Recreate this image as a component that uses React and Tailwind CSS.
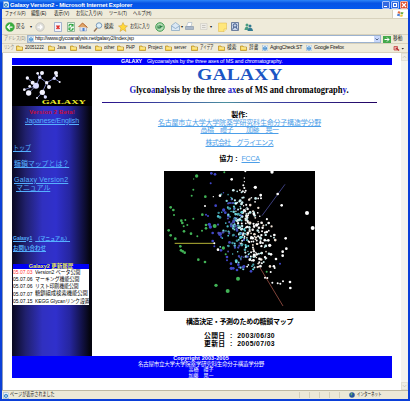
import React from "react";

const JP = "font-['Liberation_Sans','Noto_Sans_CJK_JP',sans-serif]";

/* One line of text, with an exact line height and an optional fixed width. */
function Line({ className = "", children }) {
  return <div className={"whitespace-pre flex items-center shrink-0 " + className}>{children}</div>;
}

/* Condensed text: half-width kana look, inside a slot of fixed width. */
function Narrow({ className = "", scale = "scale-x-[0.78]", children }) {
  return (
    <span className={"block shrink-0 whitespace-nowrap " + className}>
      <span className={"inline-block origin-left " + scale}>{children}</span>
    </span>
  );
}

function Folder({ label, className, scale = "" }) {
  return (
    <div className={"flex items-center gap-[2px] whitespace-nowrap shrink-0 " + className}>
      <svg className="w-[7px] h-[6px] shrink-0" viewBox="0 0 14 12">
        <path d="M1 2h5l1 2h6v7H1z" fill="#f7d65a" stroke="#b58a1c" strokeWidth="1.4" />
        <path d="M3 6h9" stroke="#fff3b0" strokeWidth="2" />
      </svg>
      <span className={"inline-block origin-left " + scale}>{label}</span>
    </div>
  );
}

function IEIcon({ className = "" }) {
  return (
    <svg className={"shrink-0 w-[7px] h-[7px] " + className} viewBox="0 0 14 14">
      <path d="M1 0h10l3 3v11H1z" fill="#e8f3fc" stroke="#7597ba" />
      <circle cx="7" cy="8" r="3.8" fill="none" stroke="#287bc5" strokeWidth="2" />
      <path d="M4 8h7" stroke="#287bc5" strokeWidth="1.8" />
    </svg>
  );
}

function Toolbar() {
  return (
    <div className="flex h-[16px] items-center pl-[3px] text-[6px] border-t border-[#d8d2bd]">
      <svg className="w-[10px] h-[10px]" viewBox="0 0 20 20">
        <circle cx="10" cy="10" r="9" fill="#36ad3c" stroke="#69ad64" />
        <path d="M15 10H6m4-5-5 5 5 5" fill="none" stroke="#fff" strokeWidth="2.5" />
      </svg>
      <Narrow className="w-[14px] ml-[1px] text-[5.3px]" scale="scale-x-[0.85]">戻る</Narrow>
      <span className="w-[7px] text-[4px]">▾</span>
      <svg className="w-[10px] h-[10px] ml-[-2px]" viewBox="0 0 20 20">
        <circle cx="10" cy="10" r="8.5" fill="#deded9" stroke="#b0b1ab" />
        <path d="M5 10h9m-4-4 4 4-4 4" fill="none" stroke="#fff" strokeWidth="2.5" />
      </svg>
      <svg className="w-[8px] h-[10px] ml-[9px]" viewBox="0 0 16 20">
        <path d="M1 1h14v18H1z" fill="#f2f5fc" stroke="#8a9dc4" strokeWidth="1.5" />
        <path d="m5 7 6 7m0-7-6 7" stroke="#e0332f" strokeWidth="3" />
      </svg>
      <svg className="w-[8px] h-[10px] ml-[5px]" viewBox="0 0 16 20">
        <path d="M1 1h14v18H1z" fill="#eaf6ea" stroke="#7ea58a" strokeWidth="1.5" />
        <path d="M12 8a4 4 0 0 0-8 1m0 4a4 4 0 0 0 8-1M12 4v4H8M4 16v-4h4" fill="none" stroke="#28a13a" strokeWidth="2.2" />
      </svg>
      <svg className="w-[10px] h-[10px] ml-[3px]" viewBox="0 0 20 20">
        <path d="M4 9v9h13V9" fill="#dfe5f5" stroke="#7c8eb4" />
        <path d="M1 10 9 2l10 9" fill="#e0a76a" stroke="#b6622c" strokeWidth="2" />
        <path d="M9 12h4v6H9z" fill="#4c81ce" />
      </svg>
      <svg className="w-[10px] h-[10px] ml-[5px]" viewBox="0 0 20 20">
        <circle cx="12" cy="7" r="5.5" fill="#dff0fa" stroke="#7898b9" strokeWidth="2" />
        <path d="m8 12-6 7" stroke="#987557" strokeWidth="3" />
      </svg>
      <Narrow className="ml-[1px] w-[14px] text-[5.3px]" scale="scale-x-[0.92]">検索</Narrow>
      <svg className="w-[10px] h-[10px]" viewBox="0 0 20 20">
        <path d="m10 1 3 6 6 1-5 4 2 7-6-4-6 4 2-7-5-4 6-1z" fill="#ffd839" stroke="#cf9a2c" />
      </svg>
      <Narrow className="ml-[2px] w-[25px] text-[5.3px]" scale="scale-x-[0.76]">お気に入り</Narrow>
      <svg className="w-[10px] h-[10px]" viewBox="0 0 20 20">
        <circle cx="10" cy="10" r="8.5" fill="#b5dcb6" stroke="#3e9b50" strokeWidth="2" />
        <path d="M6 7v5h5m-1-6v5l5-3" fill="none" stroke="#287e41" strokeWidth="2.2" />
      </svg>
      <svg className="w-[9px] h-[9px] ml-[6px]" viewBox="0 0 18 18">
        <path d="M1 7 9 1l8 6v10H1z" fill="#dbe8f4" stroke="#86a6c1" strokeWidth="1.5" />
        <path d="m1 8 8 5 8-5" fill="none" stroke="#7fa1c1" strokeWidth="1.5" />
      </svg>
      <span className="ml-[1px] w-[4px] text-[4px]">▾</span>
      <svg className="w-[9px] h-[9px]" viewBox="0 0 18 18">
        <path d="M6 1h8l-2 8H3z" fill="#fff" stroke="#92a7bd" />
        <path d="M1 9h16v6H1z" fill="#aab7c7" stroke="#7287a1" />
      </svg>
      <svg className="w-[8px] h-[9px] ml-[6px] opacity-60" viewBox="0 0 16 18">
        <path d="M1 3h13v12H1z" fill="#eee" stroke="#aaa" />
        <path d="M4 7h7m-7 4h7" stroke="#999" strokeWidth="1.5" />
      </svg>
      <span className="ml-[2px] w-[8px] text-[4px]">▾</span>
      <svg className="w-[9px] h-[10px]" viewBox="0 0 18 20">
        <path d="M1 2h16v12l-5 5H1z" fill="#ffe77b" stroke="#dfb547" />
        <path d="M17 14h-5v5" fill="#fff4b8" stroke="#dfb547" />
      </svg>
      <svg className="w-[8px] h-[9px] ml-[4px]" viewBox="0 0 16 18">
        <path d="M1 1h14v16H1z" fill="#c7d4e9" stroke="#6f809e" strokeWidth="2" />
        <circle cx="8" cy="7" r="3.5" fill="none" stroke="#405a8a" strokeWidth="2" />
        <path d="m6 10-3 5m7-5 3 5" stroke="#405a8a" strokeWidth="2" />
      </svg>
      <svg className="w-[9px] h-[10px] ml-[5px]" viewBox="0 0 18 20">
        <circle cx="6" cy="6" r="3" fill="#4a9c82" />
        <path d="M1 16c0-9 9-9 9 0z" fill="#4a9c82" />
        <circle cx="12" cy="8" r="3" fill="#347b91" />
        <path d="M7 18c0-9 11-9 11 0z" fill="#347b91" />
      </svg>
    </div>
  );
}

const atoms = [
  [82, 84, 5], [98, 98, 6], [108, 107, 9], [89, 109, 4], [73, 119, 4], [86, 129, 8],
  [127, 127, 8], [119, 82, 5], [113, 70, 4], [126, 69, 6], [140, 98, 5], [147, 111, 6],
  [163, 85, 5], [168, 69, 6], [170, 77, 4], [179, 96, 3], [111, 144, 3], [136, 141, 5],
];

function Molecule() {
  return (
    <svg className="w-[76px] h-[40px]" viewBox="48 48 228 120">
      <path
        d="m82 84 26 23-35 12m35-12-22 22m22-22 11-25-6-12m6 12 7-13m-7 13 21 16 23-13 5-16m-5 16 16 11m-39 2 7 13m-7-13-13 29-16 17m16-17 9 14"
        fill="none" stroke="#8c93d8" strokeWidth="2.5"
      />
      {atoms.map(([x, y, r], i) => (
        <circle key={i} cx={x} cy={y} r={r} fill={i % 5 === 2 ? "#d9dcff" : "#f3f3ff"} />
      ))}
      <text x="125" y="161" textLength="133" lengthAdjust="spacingAndGlyphs" fontSize="21" fontWeight="700" fill="#f2ee2c" fontFamily="Liberation Serif, serif">GALAXY</text>
    </svg>
  );
}

/* Isolated points of the sugar-chain map, grouped by colour. */
const green = [
  [110, 33, 5], [101, 42, 2], [100, 74, 3], [95, 92, 3], [136, 95, 4], [32, 127, 4], [40, 135, 4],
  [42, 150, 3], [127, 149, 4], [100, 161, 3], [64, 167, 4], [76, 165, 3], [67, 174, 4], [82, 180, 3],
  [71, 184, 3], [26, 196, 4], [32, 211, 4], [46, 221, 4], [72, 199, 4], [93, 206, 4], [112, 214, 3],
  [126, 197, 3], [138, 180, 4], [138, 190, 4], [164, 183, 6], [61, 244, 4], [63, 256, 4], [68, 259, 4],
  [74, 263, 4], [115, 284, 4], [135, 291, 4], [190, 249, 5], [234, 341, 6], [168, 361, 5], [203, 378, 6],
  [193, 22, 3], [197, 268, 3], [320, 320, 3],
];
const blue = [
  [154, 25, 4], [165, 28, 4], [152, 55, 3], [138, 149, 3], [144, 153, 3], [148, 178, 5], [151, 186, 5],
  [167, 122, 4], [158, 204, 4], [180, 207, 6], [183, 216, 3], [158, 228, 4], [163, 244, 3], [183, 256, 4],
  [191, 135, 5], [196, 143, 4], [201, 276, 4], [201, 286, 3], [213, 296, 4], [214, 310, 5], [220, 310, 4],
  [231, 315, 4], [235, 299, 4], [237, 307, 3], [252, 304, 4], [273, 319, 4], [360, 296, 3], [205, 153, 4],
];
const white = [
  [336, 21, 5], [256, 19, 3], [215, 43, 4], [253, 39, 2], [253, 50, 2], [250, 61, 3], [253, 69, 3],
  [257, 77, 3], [286, 67, 5], [302, 90, 4], [303, 100, 3], [353, 87, 4], [365, 121, 4], [441, 144, 6],
  [458, 189, 6], [326, 174, 4], [343, 210, 4], [377, 220, 4], [379, 251, 4], [368, 260, 4], [368, 272, 4],
  [320, 201, 4], [325, 226, 4], [329, 241, 5], [333, 268, 4], [348, 282, 4], [344, 309, 3], [332, 321, 3],
  [315, 338, 3], [322, 339, 3], [337, 353, 3], [353, 355, 3], [361, 356, 3], [369, 349, 3], [390, 351, 4],
  [391, 369, 4], [180, 92, 4], [160, 95, 2], [135, 123, 3], [163, 235, 3], [174, 254, 4], [290, 180, 5],
];

function makeCluster() {
  let seed = 73;
  const rnd = () => {
    seed = (seed * 16807) % 2147483647;
    return seed / 2147483647;
  };
  const out = [];
  for (let i = 0; i < 340; i++) {
    const t = i % 2 ? rnd() : (rnd() + rnd() * 0.9) / 1.9;
    const spread = (rnd() + rnd() + rnd() - 1.5) * (50 + 24 * Math.sin(t * Math.PI));
    const y = 74 + t * 240;
    const x = 232 + t * 50 + spread;
    const palette =
      spread < -22 ? ["#4650b8", "#4dbfcb", "#3b8f99", "#79d7de", "#5252b0"]
      : spread < 2 ? ["#62d4dc", "#bfeaf0", "#fff", "#49a7b0", "#5969d6", "#d5f3f5"]
      : ["#fff", "#fff", "#f2f2f2", "#f0e2d5", "#c9eced"];
    out.push([x, y, 2 + rnd() * 2.2, palette[Math.floor(rnd() * palette.length)]]);
  }
  return out;
}
const cluster = makeCluster();

function GalaxyMap() {
  const dots = (list, fill) =>
    list.map(([x, y, r], i) => <circle key={fill + i} cx={x} cy={y} r={r} fill={fill} />);
  return (
    <svg className="block w-[151px] h-[140px] bg-black" viewBox="12 18 453 420" preserveAspectRatio="none">
      <path d="M44 235h118" stroke="#b5b236" strokeWidth="3" />
      <path d="m375 58-69 94" stroke="#484a96" strokeWidth="2.5" />
      <path d="m298 305 71 118" stroke="#9a5045" strokeWidth="2.5" />
      {dots(green, "#42b457")}
      {dots(blue, "#4047c8")}
      {cluster.map(([x, y, r, f], i) => <circle key={i} cx={x} cy={y} r={r} fill={f} />)}
      {dots(white, "#fff")}
    </svg>
  );
}

const news = [
  ["05.07.03", "Version2 ベータ公開", "text-[#f33]", "scale-x-[0.9]"],
  ["05.07.06", "マーキング機能公開", "text-black", "scale-x-[0.9]"],
  ["05.07.06", "リスト印刷機能公開", "text-black", "scale-x-[0.88]"],
  ["05.07.07", "糖鎖組成検索機能公開", "text-black", "scale-x-[0.96]"],
  ["05.07.15", "KEGG Glycanリンク設置", "text-black", "scale-x-[0.88]"],
];

function Sidebar() {
  return (
    <aside className="w-[80px] h-[290px] shrink-0 flex flex-col bg-[linear-gradient(90deg,#080820_0%,#20206e_17%,#3030c0_38%,#3030cc_55%,#2626a0_72%,#050510_97%)] text-[#55b0ff]">
      <div className="h-[40px] pl-[4px] bg-black shrink-0"><Molecule /></div>
      <Line className="h-[7px] mt-[2px] justify-center text-[6px] font-bold text-[#c50e35] tracking-[0.15px]">Version 2 Beta!</Line>
      <Line className="h-[8px] mt-[1px] justify-center text-[7px] underline tracking-[-0.08px]">Japanese/English</Line>
      <Line className="h-[10px] mt-[18px] pl-[1px] text-[7px]">
        <Narrow scale="scale-x-[0.86]"><u>トップ</u></Narrow>
      </Line>
      <Line className="h-[10px] mt-[6px] pl-[2px] text-[7px] underline tracking-[-0.1px]">糖鎖マップとは？</Line>
      <Line className="h-[8px] mt-[7px] pl-[2px] text-[7px] underline tracking-[0.22px]">Galaxy Version2</Line>
      <Line className="h-[8px] pl-[4px] text-[7px] underline tracking-[-0.1px]">マニュアル</Line>
      <Line className="h-[8px] mt-[43px] pl-[1px] text-[5px] font-bold gap-[3px]">
        <span className="underline">Galaxy1</span>
        <span className="underline">（マニュアル）</span>
      </Line>
      <Line className="h-[8px] mt-[3px] pl-[1px] text-[5.5px] font-bold underline">お問い合わせ</Line>
      <div className="w-[76px] ml-[1px] mt-[11px] bg-white text-black text-[5.5px]">
        <Line className="h-[5px] bg-[#0000f4] justify-center text-[5.5px] font-bold text-[#eeee54]">Galaxy2 更新履歴</Line>
        {news.map(([date, text, color, scale]) => (
          <Line key={text} className="h-[7.2px]">
            <span className={"w-[21.5px] shrink-0 text-[5px] " + color}>{date}</span>
            <Narrow className="w-[54px]" scale={scale}>{text}</Narrow>
          </Line>
        ))}
      </div>
    </aside>
  );
}

function Main() {
  const B = ({ children }) => <span className="text-[#2323c8]">{children}</span>;
  return (
    <main className="w-[275px] ml-[10px] flex flex-col items-center text-black">
      <Line className="h-[14px] mt-[2px] font-['Liberation_Serif',serif] text-[17px] font-bold text-[#1c55c4]">
        <span className="block origin-center scale-x-[1.16] leading-[14px]">GALAXY</span>
      </Line>
      <Line className="h-[11px] mt-[2.5px] font-['Liberation_Serif',serif] text-[9.3px] font-bold leading-[11px]">
        <span className="block origin-center scale-x-[0.92]">
          <B>G</B>lyco<B>a</B>na<B>l</B>ysis by the three <B>ax</B>es of MS and chromatograph<B>y</B>.
        </span>
      </Line>
      <div className="h-px shrink-0 w-full mt-[6.5px] bg-[linear-gradient(90deg,#29108a,#3f55a5_28%,#4c8f9f_45%,#3b40a0_65%,#200060)]" />
      <Line className="h-[8px] mt-[7px] text-[7px] font-bold">製作:</Line>
      <Line className="h-[7px] mt-[0.5px] text-[7px] underline text-[#4c9ee8] tracking-[-0.2px]">名古屋市立大学大学院薬学研究科生命分子構造学分野</Line>
      <Line className="h-[7px] text-[7px] underline text-[#4c9ee8] tracking-[-0.5px]">高橋　禮子　　加藤　晃一</Line>
      <Line className="h-[8px] mt-[5.5px] text-[7px] underline text-[#4c9ee8] tracking-[-0.8px]">株式会社　グライエンス</Line>
      <Line className="h-[8px] mt-[8px] text-[7px]">
        <b className="mr-[4px]">協力 :</b><span className="underline text-[#4c9ee8] tracking-[-0.2px]">FCCA</span>
      </Line>
      <div className="mt-[9px]"><GalaxyMap /></div>
      <Line className="h-[10px] mt-[5px] text-[7px] font-bold tracking-[-0.3px]">構造決定・予測のための糖鎖マップ</Line>
      <Line className="h-[8px] mt-[6px] text-[6.8px] font-bold tracking-[0.38px]">公開日  :  2003/06/30</Line>
      <Line className="h-[8px] text-[6.8px] font-bold tracking-[0.38px]">更新日  :  2005/07/03</Line>
    </main>
  );
}

export default function App() {
  return (
    <div className={JP + " w-[410px] h-[401px] overflow-hidden flex flex-col bg-[#0b3fd8] leading-none"}>
      <header className="h-[9px] shrink-0 flex items-center pl-[3px] pr-[2px] bg-[linear-gradient(180deg,#2f86f8,#0754e4_35%,#0459ee)] text-white">
        <IEIcon className="mr-[1px] !w-[6px]" />
        <Line className="text-[6px] font-bold tracking-[-0.14px]">Galaxy Version2 - Microsoft Internet Explorer</Line>
        <div className="ml-auto flex gap-[1px]">
          <div className="w-[8px] h-[8px] rounded-[1px] border border-[#a8c3fa] bg-[#3269e0] flex items-end p-[1px]"><i className="block w-[3px] h-px bg-white" /></div>
          <div className="w-[8px] h-[8px] rounded-[1px] border border-[#a8c3fa] bg-[#3269e0] p-[1px]"><i className="block w-[4px] h-[4px] border border-white" /></div>
          <div className="w-[8px] h-[8px] rounded-[1px] border border-[#f3b4a0] bg-[#dc4c2d]">
            <svg className="block w-[6px] h-[6px]" viewBox="0 0 6 6"><path d="m1 1 4 4m0-4L1 5" stroke="#fff" strokeWidth="1.1" /></svg>
          </div>
        </div>
      </header>

      <div className="mx-[2px] shrink-0 bg-[#efebda] text-[#151515]">
        <div className="h-[9px] flex items-center pl-[3px] text-[5.5px] whitespace-nowrap">
          <Narrow className="w-[26px]" scale="scale-x-[0.71]">ファイル(F)</Narrow>
          <Narrow className="w-[23px]" scale="scale-x-[0.84]">編集(E)</Narrow>
          <Narrow className="w-[22px]" scale="scale-x-[0.84]">表示(V)</Narrow>
          <Narrow className="w-[33px]" scale="scale-x-[0.76]">お気に入り(A)</Narrow>
          <Narrow className="w-[24px]" scale="scale-x-[0.76]">ツール(T)</Narrow>
          <Narrow scale="scale-x-[0.76]">ヘルプ(H)</Narrow>
          <div className="ml-auto w-[16px] h-[8px] bg-white border-l border-[#d5d0bc] flex items-center justify-center">
            <svg className="w-[7px] h-[6px]" viewBox="0 0 14 12">
              <path d="M2 1q3-1 5 1L6 6Q4 4 1 5z" fill="#e66b3c" /><path d="M8 2q3 1 5 0l-1 4q-2 1-5 0z" fill="#6eae43" />
              <path d="M1 6q3-1 5 1l-1 4q-2-2-5-1z" fill="#457cd1" /><path d="M7 7q3 1 5 0l-1 4q-2 1-5 0z" fill="#efc53e" />
            </svg>
          </div>
        </div>
        <Toolbar />
        <div className="h-[9px] flex items-center text-[5.3px] pl-[2px] border-t border-[#d8d2bd] whitespace-nowrap">
          <Narrow className="w-[23px] text-[#8c897e]" scale="scale-x-[0.76]">アドレス(D)</Narrow>
          <div className="flex-1 h-[8px] bg-white border border-[#9cb2cf] flex items-center text-[5.5px]">
            <IEIcon className="mr-[1px] !w-[6px] !h-[6px]" />
            <span className="tracking-[-0.3px]">http://www.glycoanalysis.net/galaxy2/index.jsp</span>
            <span className="ml-auto w-[6px] h-[6px] bg-[#c8d7fb] flex items-center justify-center">
              <svg className="w-[4px] h-[3px]" viewBox="0 0 4 3"><path d="m.5.5 1.5 1.5L3.5.5" fill="none" stroke="#4c6185" /></svg>
            </span>
          </div>
          <span className="ml-[2px] w-[8px] h-[7px] bg-[#43a94b] flex items-center justify-center">
            <svg className="w-[6px] h-[5px]" viewBox="0 0 12 10"><path d="M1 5h9M6 1l4 4-4 4" fill="none" stroke="#fff" strokeWidth="2" /></svg>
          </span>
          <Narrow className="w-[17px] pl-[2px]" scale="scale-x-[0.9]">移動</Narrow>
        </div>
        <div className="h-[10px] flex items-center text-[5.2px] pl-[2px] border-y border-[#d8d2bd]">
          <Narrow className="w-[12px] text-[#8c897e]" scale="scale-x-[0.64]">リンク</Narrow>
          <Folder label="20051222" className="w-[32px]" scale="scale-x-[0.82]" />
          <Folder label="Java" className="w-[22px]" scale="scale-x-[0.82]" />
          <Folder label="Media" className="w-[25px]" scale="scale-x-[0.84]" />
          <Folder label="other" className="w-[22px]" scale="scale-x-[0.9]" />
          <Folder label="PHP" className="w-[22px]" scale="scale-x-[0.82]" />
          <Folder label="Project" className="w-[26px]" scale="scale-x-[0.9]" />
          <Folder label="server" className="w-[26px]" scale="scale-x-[0.86]" />
          <Folder label="アイデア" className="w-[27px]" scale="scale-x-[0.66]" />
          <Folder label="検索" className="w-[22px]" scale="scale-x-[0.9]" />
          <Folder label="辞書" className="w-[22px]" scale="scale-x-[0.9]" />
          <div className="flex items-center gap-[2px] w-[44px] whitespace-nowrap tracking-[-0.3px]"><IEIcon className="!w-[6px] !h-[6px]" />AgingCheck ST</div>
          <div className="flex items-center gap-[2px] whitespace-nowrap tracking-[-0.3px]"><IEIcon className="!w-[6px] !h-[6px]" />Google Firefox</div>
          <svg className="ml-auto mr-[4px] w-[11px] h-[7px]" viewBox="0 0 22 14">
            <path d="M2 3h7v7H2z" fill="#e9b2ae" stroke="#c33d3d" strokeWidth="1.5" /><path d="m6 6 6 5" stroke="#b62e2e" strokeWidth="3" />
            <path d="M17 6h5l-2.5 3z" fill="#333" />
          </svg>
        </div>
      </div>

      <div className="mx-[2px] h-[337px] shrink-0 flex bg-white border-l border-[#8d9bbb]">
        <div className="pl-[9px] pt-[5px] w-[398px] shrink-0">
          <div className="w-[380px]">
            <Line className="h-[7px] bg-[#0000fa] text-white pl-[109px] text-[5.3px]">
              <b className="w-[26px] shrink-0 tracking-[-0.2px]">GALAXY</b>
              <span className="tracking-[-0.1px]">Glycoanalysis by the three axes of MS and chromatography.</span>
            </Line>
            <div className="flex pt-[1px] h-[291px]">
              <Sidebar />
              <Main />
            </div>
            <footer className="h-[22px] bg-[#0000fa] text-white text-[5.5px] flex flex-col items-center pr-[2px]">
              <Line className="h-[5.5px] font-bold tracking-[0.1px]">Copyright 2003-2005</Line>
              <Line className="h-[5.5px] tracking-[-0.25px]">名古屋市立大学大学院薬学研究科生命分子構造学分野</Line>
              <Line className="h-[5.5px] text-[5px]">高橋　禮子</Line>
              <Line className="h-[5.5px] text-[5px]">加藤　晃一</Line>
            </footer>
          </div>
        </div>
        <div className="flex-1 flex flex-col justify-between bg-[#f5f4ef]">
          {["M1 4l2-2 2 2", "M1 2l2 2 2-2"].map((d) => (
            <div key={d} className="h-[8px] bg-[#eeede5] border border-[#e2e0d5]">
              <svg className="w-[5px] h-[6px]" viewBox="0 0 6 6"><path d={d} fill="none" stroke="#c5c3b6" /></svg>
            </div>
          ))}
        </div>
      </div>

      <footer className="mx-[2px] h-[9px] shrink-0 bg-[#ece9d8] border-t border-[#bdb8a2] flex items-center text-[5.5px] pl-[1px] whitespace-nowrap text-[#151515]">
        <IEIcon className="mr-[1px] !w-[6px]" />
        <Narrow scale="scale-x-[0.74]">ページが表示されました</Narrow>
        <div className="ml-auto flex h-full items-center">
          {[0, 1, 2, 3, 4].map((i) => <i key={i} className="w-[10px] h-[6px] border-l border-[#d3cfba]" />)}
          <svg className="w-[6px] h-[6px] mr-[2px]" viewBox="0 0 12 12"><circle cx="6" cy="6" r="5.5" fill="#26569d" /><path d="M3 3q3-2 4 1L4 8z" fill="#65b36d" /></svg>
          <Narrow className="w-[51px]" scale="scale-x-[0.64]">インターネット</Narrow>
        </div>
      </footer>
    </div>
  );
}
